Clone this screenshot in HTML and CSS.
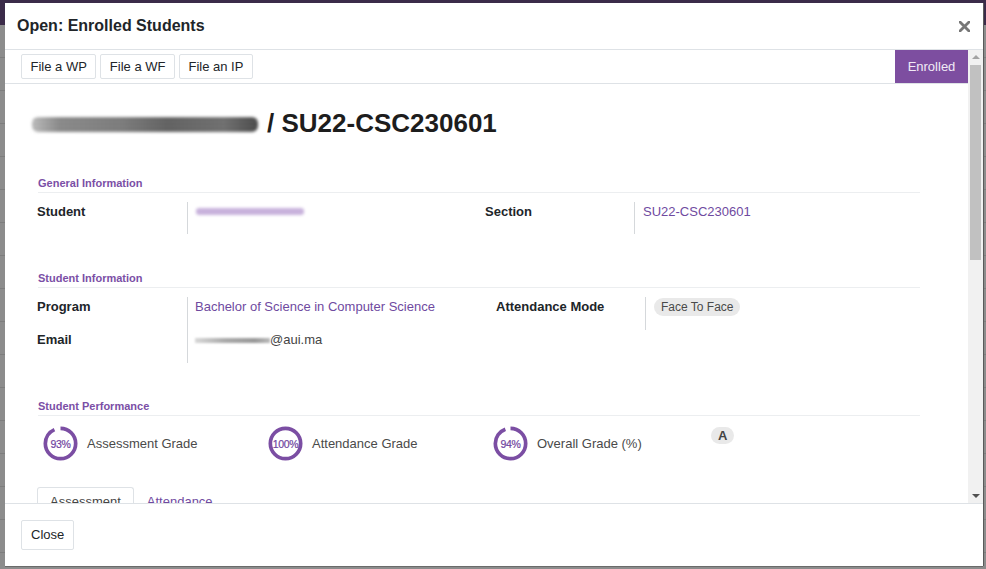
FILE: index.html
```html
<!DOCTYPE html>
<html>
<head>
<meta charset="utf-8">
<link rel="stylesheet" href="styles.css">
</head>
<body>
<div class="backdrop">
  <div class="navbar"></div>
  <div class="page"></div>
</div>
<div class="modal">
  <div class="modal-header">
    <div class="modal-title">Open: Enrolled Students</div>
    <svg class="close-x" width="11" height="11" viewBox="0 0 11 11"><path d="M1 1 L10 10 M10 1 L1 10" stroke="#777" stroke-width="2.8" stroke-linecap="square"/></svg>
  </div>
  <div class="modal-body">
    <div class="scroll-content">
      <div class="statusbar">
        <div class="actions">
          <button class="btn">File a WP</button>
          <button class="btn">File a WF</button>
          <button class="btn">File an IP</button>
        </div>
        <div class="status-active">Enrolled</div>
      </div>
      <div class="sheet">
        <h1 class="title"><span class="blur-name"></span> / SU22-CSC230601</h1>

        <div class="sep-heading">General Information</div>
        <div class="group-row">
          <div class="group group-general-left">
            <div class="field short">
              <div class="label">Student</div>
              <div class="value"><span class="blur-link"></span></div>
            </div>
          </div>
          <div class="group">
            <div class="field short">
              <div class="label">Section</div>
              <div class="value link">SU22-CSC230601</div>
            </div>
          </div>
        </div>

        <div class="sep-heading">Student Information</div>
        <div class="group-row">
          <div class="group group-info-left">
            <div class="field-table">
              <div class="labels">
                <div class="label row">Program</div>
                <div class="label row">Email</div>
              </div>
              <div class="value values">
                <div class="row link">Bachelor of Science in Computer Science</div>
                <div class="row"><span class="blur-mail"></span>@aui.ma</div>
              </div>
            </div>
          </div>
          <div class="group">
            <div class="field">
              <div class="label">Attendance Mode</div>
              <div class="value"><span class="tag">Face To Face</span></div>
            </div>
          </div>
        </div>

        <div class="sep-heading perf-heading">Student Performance</div>
        <div class="perf-row">
          <div class="perf">
            <div class="gauge">
              <svg width="35" height="35" viewBox="0 0 36 36"><circle cx="18" cy="18" r="15.6" fill="none" stroke="#7b4ea3" stroke-width="3.8" stroke-dasharray="91 7" transform="rotate(-90 18 18)"/></svg>
              <span class="gauge-text">93%</span>
            </div>
            <span class="perf-label">Assessment Grade</span>
          </div>
          <div class="perf">
            <div class="gauge">
              <svg width="35" height="35" viewBox="0 0 36 36"><circle cx="18" cy="18" r="15.6" fill="none" stroke="#7b4ea3" stroke-width="3.8"/></svg>
              <span class="gauge-text">100%</span>
            </div>
            <span class="perf-label">Attendance Grade</span>
          </div>
          <div class="perf">
            <div class="gauge">
              <svg width="35" height="35" viewBox="0 0 36 36"><circle cx="18" cy="18" r="15.6" fill="none" stroke="#7b4ea3" stroke-width="3.8" stroke-dasharray="92 6" transform="rotate(-90 18 18)"/></svg>
              <span class="gauge-text">94%</span>
            </div>
            <span class="perf-label">Overall Grade (%)</span>
          </div>
          <div class="perf perf-badge">
            <span class="badge">A</span>
          </div>
        </div>

        <div class="tabs">
          <div class="tab active">Assessment</div>
          <div class="tab">Attendance</div>
        </div>
      </div>
    </div>
    <div class="scrollbar">
      <div class="arrow up"></div>
      <div class="track"><div class="thumb"></div></div>
      <div class="arrow down"></div>
    </div>
  </div>
  <div class="modal-footer">
    <button class="btn btn-close">Close</button>
  </div>
</div>
</body>
</html>
```

FILE: styles.css
```css
* { box-sizing: border-box; }
html, body { margin: 0; padding: 0; }
body {
  width: 986px;
  height: 569px;
  overflow: hidden;
  font-family: "Liberation Sans", Arial, sans-serif;
  font-size: 13px;
  color: #212529;
  position: relative;
  background: #8a8a8a;
}
.backdrop { position: absolute; inset: 0; }
.navbar { height: 25px; background: #3b2b49; }
.page {
  height: 544px;
  background: repeating-linear-gradient(180deg, #8c8c8c 0 32px, #7d7d7d 32px 33px);
}

.modal {
  position: absolute;
  left: 5px;
  top: 3px;
  width: 978px;
  height: 563px;
  background: #fff;
  display: flex;
  flex-direction: column;
  box-shadow: 1px 0 0 #5a5a5a, 0 1px 0 #6a6a6a;
}
.modal-header {
  height: 47px;
  border-bottom: 1px solid #dee2e6;
  display: flex;
  align-items: center;
  justify-content: space-between;
  padding: 0 12px 0 12px;
}
.modal-title {
  font-size: 16px;
  font-weight: bold;
  color: #212529;
  line-height: 20px;
}
.close-x { margin-right: 1px; margin-top: 0; }

.modal-body {
  flex: 1;
  display: flex;
  min-height: 0;
}
.scroll-content {
  flex: 1;
  overflow: hidden;
}
.statusbar {
  height: 34px;
  border-bottom: 1px solid #dee2e6;
  display: flex;
  justify-content: space-between;
  align-items: flex-start;
}
.actions {
  display: flex;
  gap: 4px;
  padding: 4px 0 0 16px;
}
.btn {
  font-family: "Liberation Sans", Arial, sans-serif;
  font-size: 13px;
  color: #212529;
  background: #fff;
  border: 1px solid #dee2e6;
  border-radius: 2px;
  height: 25px;
  padding: 0 8.5px;
  line-height: 23px;
}
.status-active {
  width: 73px;
  height: 33px;
  background: #7d4ea0;
  color: #f1ebf6;
  font-size: 13px;
  line-height: 33px;
  text-align: center;
}

.sheet {
  padding: 0 48px 0 32px;
}
.title {
  margin: 24px 0 0 -5px;
  font-size: 26px;
  line-height: 31px;
  font-weight: bold;
  color: #1d1d1d;
  display: flex;
  align-items: center;
}
.blur-name {
  display: inline-block;
  width: 226px;
  height: 15px;
  margin-right: 9px;
  margin-top: 1px;
  border-radius: 6px;
  background:
    repeating-linear-gradient(180deg, rgba(255,255,255,0.12) 0 2px, rgba(0,0,0,0.1) 2px 4px),
    linear-gradient(90deg, #c0c0c0 0%, #8a8a8a 12%, #7a7a7a 40%, #5e5e5e 60%, #6d6d6d 85%, #444 100%);
  filter: blur(1.6px);
}
.sep-heading {
  margin-top: 36px;
  margin-left: 1px;
  height: 18px;
  padding-bottom: 2px;
  line-height: 16px;
  font-size: 11px;
  font-weight: bold;
  color: #7b4fa6;
  border-bottom: 1px solid #eceef0;
}
.perf-heading { margin-top: 35px; }
.group-row {
  display: flex;
  margin-top: 9px;
}
.group { flex: 1; }
.group-general-left { flex: 0 0 448px; }
.group-info-left { flex: 0 0 459px; }
.field { display: flex; min-height: 33px; }
.field.short { min-height: 32px; }
.label {
  width: 150px;
  font-weight: bold;
  line-height: 20px;
  color: #212529;
  flex: none;
}
.group:not(.group-general-left):not(.group-info-left) .label { width: 149px; }
.value {
  flex: 1;
  border-left: 1px solid #d5d8db;
  padding-left: 8px;
  line-height: 20px;
  color: #444;
}
.link { color: #6f4a9f; }
.blur-link {
  display: inline-block;
  width: 108px;
  height: 7px;
  margin-top: 6px;
  vertical-align: top;
  background: #c8b2dc;
  border-radius: 3px;
  filter: blur(1.5px);
}
.field-table { display: flex; }
.labels .row, .values .row { height: 33px; }
.values { padding-left: 7px; }
.blur-mail {
  display: inline-block;
  width: 75px;
  height: 5px;
  vertical-align: top;
  margin-top: 8px;
  background: linear-gradient(90deg, #d8d8d8, #aaa 40%, #999 80%, #bbb);
  filter: blur(1px);
}
.tag {
  display: inline-block;
  height: 18px;
  line-height: 18px;
  padding: 0 7px;
  border-radius: 9px;
  background: #e9e9e9;
  color: #4a4a4a;
  font-size: 12px;
  margin-top: 1px;
}

.perf-row {
  display: grid;
  grid-template-columns: 225px 225px 218px auto;
  padding-left: 6px;
  margin-top: 10px;
}
.perf { display: flex; align-items: center; gap: 9px; }
.perf-badge { align-items: flex-start; }
.gauge {
  position: relative;
  width: 35px;
  height: 35px;
  flex: none;
}
.gauge svg { display: block; }
.gauge-text {
  position: absolute;
  inset: 0;
  display: flex;
  align-items: center;
  justify-content: center;
  font-size: 10.5px;
  color: #6f45a0;
  letter-spacing: -0.4px;
  -webkit-text-stroke: 0.2px #6f45a0;
}
.perf-label { color: #4a4a4a; font-size: 13px; }
.badge {
  display: inline-block;
  height: 17px;
  line-height: 17px;
  padding: 0 7px;
  border-radius: 9px;
  background: #e9e9e9;
  color: #444;
  font-weight: bold;
  margin-top: 1px;
}

.tabs {
  display: flex;
  margin-top: 26px;
}
.tab {
  padding: 4px 12px;
  line-height: 20px;
  border: 1px solid transparent;
  color: #6f4a9f;
}
.tab.active {
  border-color: #dee2e6;
  border-bottom-color: #fff;
  border-radius: 3px 3px 0 0;
  color: #444;
}

.scrollbar {
  width: 15px;
  flex: none;
  background: #f1f1f1;
  display: flex;
  flex-direction: column;
}
.arrow { height: 15px; position: relative; flex: none; }
.arrow::after {
  content: "";
  position: absolute;
  left: 4px;
  width: 0; height: 0;
  border-left: 4px solid transparent;
  border-right: 4px solid transparent;
}
.arrow.up::after { top: 5px; border-bottom: 4px solid #a3a3a3; }
.arrow.down::after { top: 6px; border-top: 4px solid #505050; }
.track { flex: 1; padding: 0 2px; }
.thumb {
  height: 195px;
  background: #c1c1c1;
}

.modal-footer {
  height: 63px;
  border-top: 1px solid #dee2e6;
  padding: 16px 16px;
  flex: none;
}
.btn-close { height: 30px; padding: 0 9px; line-height: 28px; }
```
